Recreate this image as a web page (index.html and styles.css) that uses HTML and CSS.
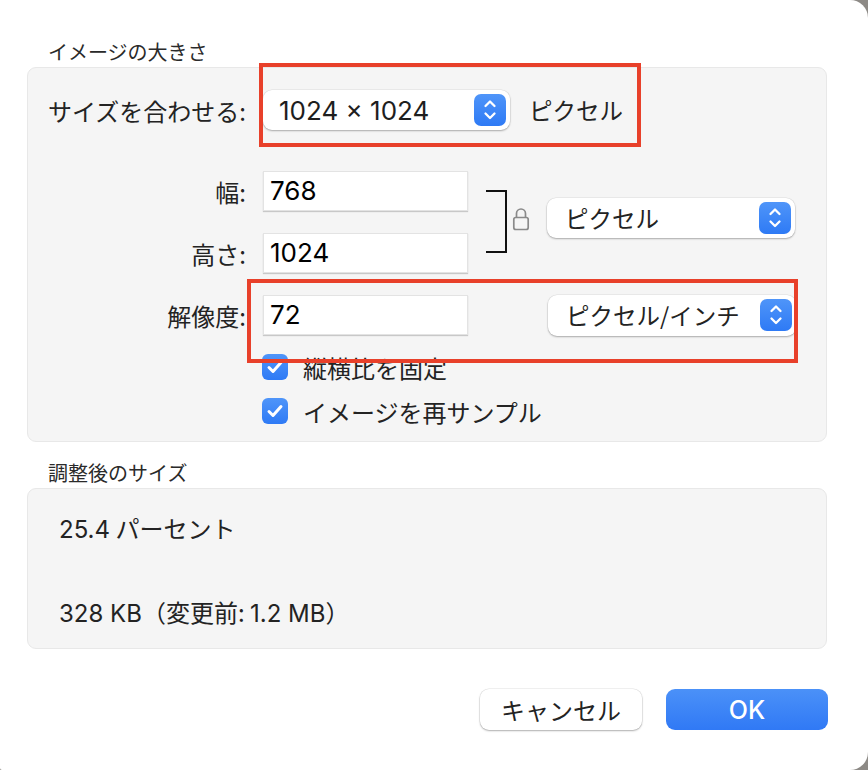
FILE: index.html
```html
<!DOCTYPE html>
<html lang="ja">
<head>
<meta charset="utf-8">
<title>イメージの大きさ</title>
<link rel="stylesheet" href="styles.css">
</head>
<body>
<div class="window">
  <div class="section-label">イメージの大きさ</div>
  <div class="group group-size">
    <div class="row">
      <div class="label">サイズを合わせる:</div>
      <div class="popup popup-fit"><span class="popup-text num">1024 × 1024</span><span class="stepper"><svg width="32" height="32" viewBox="0 0 32 32"><path d="M11.5 12L16 7.5L20.5 12M11.5 19.5L16 24L20.5 19.5" fill="none" stroke="#fff" stroke-width="2.3" stroke-linecap="round" stroke-linejoin="round"/></svg></span></div>
      <div class="unit">ピクセル</div>
    </div>
    <div class="dims">
      <div class="dims-fields">
        <div class="row">
          <div class="label">幅:</div>
          <div class="field num">768</div>
        </div>
        <div class="row row-gap">
          <div class="label">高さ:</div>
          <div class="field num">1024</div>
        </div>
      </div>
      <div class="bracket"></div>
      <svg class="lock" width="18" height="26" viewBox="0 0 18 26"><path d="M4.5 12.5V8.5a4.5 4.5 0 0 1 9 0v4" fill="none" stroke="#8a8a8a" stroke-width="1.7"/><rect x="1.8" y="12.5" width="14.4" height="12" rx="2" fill="none" stroke="#8a8a8a" stroke-width="1.7"/></svg>
      <div class="popup popup-unit"><span class="popup-text">ピクセル</span><span class="stepper"><svg width="32" height="32" viewBox="0 0 32 32"><path d="M11.5 12L16 7.5L20.5 12M11.5 19.5L16 24L20.5 19.5" fill="none" stroke="#fff" stroke-width="2.3" stroke-linecap="round" stroke-linejoin="round"/></svg></span></div>
    </div>
    <div class="row row-gap">
      <div class="label">解像度:</div>
      <div class="field num">72</div>
      <div class="popup popup-res"><span class="popup-text">ピクセル/インチ</span><span class="stepper"><svg width="32" height="32" viewBox="0 0 32 32"><path d="M11.5 12L16 7.5L20.5 12M11.5 19.5L16 24L20.5 19.5" fill="none" stroke="#fff" stroke-width="2.3" stroke-linecap="round" stroke-linejoin="round"/></svg></span></div>
    </div>
    <div class="check-row check-first">
      <span class="check"><svg width="26" height="26" viewBox="0 0 26 26"><path d="M7 13.5L11 17.5L19 8.5" fill="none" stroke="#fff" stroke-width="3" stroke-linecap="round" stroke-linejoin="round"/></svg></span>
      <span class="check-text">縦横比を固定</span>
    </div>
    <div class="check-row check-second">
      <span class="check"><svg width="26" height="26" viewBox="0 0 26 26"><path d="M7 13.5L11 17.5L19 8.5" fill="none" stroke="#fff" stroke-width="3" stroke-linecap="round" stroke-linejoin="round"/></svg></span>
      <span class="check-text">イメージを再サンプル</span>
    </div>
  </div>
  <div class="section-label section-second">調整後のサイズ</div>
  <div class="group group-result">
    <div class="result-line"><span class="num">25.4</span> パーセント</div>
    <div class="result-line result-second"><span class="num">328 KB</span>（変更前: <span class="num">1.2 MB</span>）</div>
  </div>
  <div class="buttons">
    <div class="btn btn-cancel">キャンセル</div>
    <div class="btn btn-ok">OK</div>
  </div>
  <div class="mark mark-fit"></div>
  <div class="mark mark-res"></div>
</div>
</body>
</html>
```
FILE: styles.css
```css
* { box-sizing: border-box; }
html, body {
  margin: 0;
  padding: 0;
  background: #8d8a86;
}
body {
  font-family: "Noto Sans CJK JP", "Inter", sans-serif;
  color: #232323;
}
.num {
  font-family: "Inter", "Noto Sans CJK JP", sans-serif;
}
.window {
  position: relative;
  width: 868px;
  height: 770px;
  background: #ffffff;
  border-radius: 0 18px 18px 2px;
  padding: 40px 41px 0 27px;
}
.section-label {
  font-size: 20px;
  line-height: 24px;
  padding-left: 21px;
  margin-bottom: 3px;
  color: #2a2a2a;
}
.section-second {
  margin-top: 19px;
}
.group {
  width: 800px;
  background: #f5f5f5;
  border: 1px solid #e8e8e8;
  border-radius: 9px;
}
.group-size {
  padding: 22px 0 16px 19px;
  display: flex;
  flex-direction: column;
}
.row {
  display: flex;
  align-items: center;
  height: 40px;
}
.row-gap {
  margin-top: 22px;
}
.label {
  width: 199px;
  text-align: right;
  font-size: 24px;
  margin-right: 17px;
  white-space: nowrap;
}
.popup {
  display: flex;
  align-items: center;
  justify-content: space-between;
  height: 40px;
  background: #ffffff;
  border-radius: 9px;
  box-shadow: 0 0 0 0.5px rgba(0,0,0,0.08), 0 1px 2px rgba(0,0,0,0.28);
  padding: 0 4px 0 16px;
}
.popup-fit {
  width: 247px;
}
.popup-fit .popup-text {
  font-size: 26px;
  color: #1e1e1e;
}
.popup-text {
  font-size: 23.5px;
  white-space: nowrap;
}
.stepper {
  width: 32px;
  height: 32px;
  border-radius: 7px;
  background: linear-gradient(#4f95f9, #2e7af5);
  display: flex;
}
.unit {
  margin-left: 19px;
  font-size: 23.5px;
}
.field {
  width: 205px;
  height: 40px;
  background: #ffffff;
  border: 1px solid #e3e3e3;
  box-shadow: 0 1px 1px rgba(0,0,0,0.18);
  font-size: 26px;
  line-height: 38px;
  padding-left: 6px;
  color: #000;
}
.dims {
  display: flex;
  align-items: center;
  margin-top: 41px;
}
.bracket {
  width: 21px;
  height: 63px;
  margin-left: 18px;
  border: 2px solid #111;
  border-left: none;
  margin-top: -1px;
}
.lock {
  margin-left: 5px;
  margin-bottom: 9px;
}
.popup-unit, .popup-res {
  width: 248px;
  padding-left: 18px;
}
.popup-unit {
  margin-left: 17px;
  margin-bottom: 8px;
}
.popup-res {
  margin-left: 80px;
  height: 41px;
}
.check-row {
  display: flex;
  align-items: center;
  height: 28px;
  padding-left: 215px;
}
.check-first { margin-top: 18px; }
.check-second { margin-top: 16px; }
.check {
  width: 26px;
  height: 26px;
  border-radius: 6px;
  background: linear-gradient(#4f95f9, #2e7af5);
  display: flex;
}
.check-text {
  margin-left: 15px;
  font-size: 24px;
}
.group-result {
  height: 161px;
  padding: 25px 0 0 31px;
}
.result-line {
  font-size: 24px;
  line-height: 28px;
}
.result-line .num { font-size: 24px; }
.result-second {
  margin-top: 54px;
}
.buttons {
  display: flex;
  justify-content: flex-end;
  gap: 24px;
  width: 801px;
  margin-top: 40px;
}
.btn {
  width: 162px;
  height: 41px;
  border-radius: 9px;
  display: flex;
  align-items: center;
  justify-content: center;
  font-size: 24px;
}
.btn-cancel {
  background: #ffffff;
  box-shadow: 0 0 0 0.5px rgba(0,0,0,0.1), 0 1px 2px rgba(0,0,0,0.28);
}
.btn-ok {
  background: linear-gradient(#4b91f8, #3079f5);
  color: #ffffff;
  font-family: "Inter", sans-serif;
  font-size: 25px;
  font-weight: 500;
}
.mark {
  position: absolute;
  border: 4px solid #e8402a;
}
.mark-fit {
  left: 259px;
  top: 63px;
  width: 382px;
  height: 84px;
}
.mark-res {
  left: 247px;
  top: 279px;
  width: 551px;
  height: 84px;
}
```
